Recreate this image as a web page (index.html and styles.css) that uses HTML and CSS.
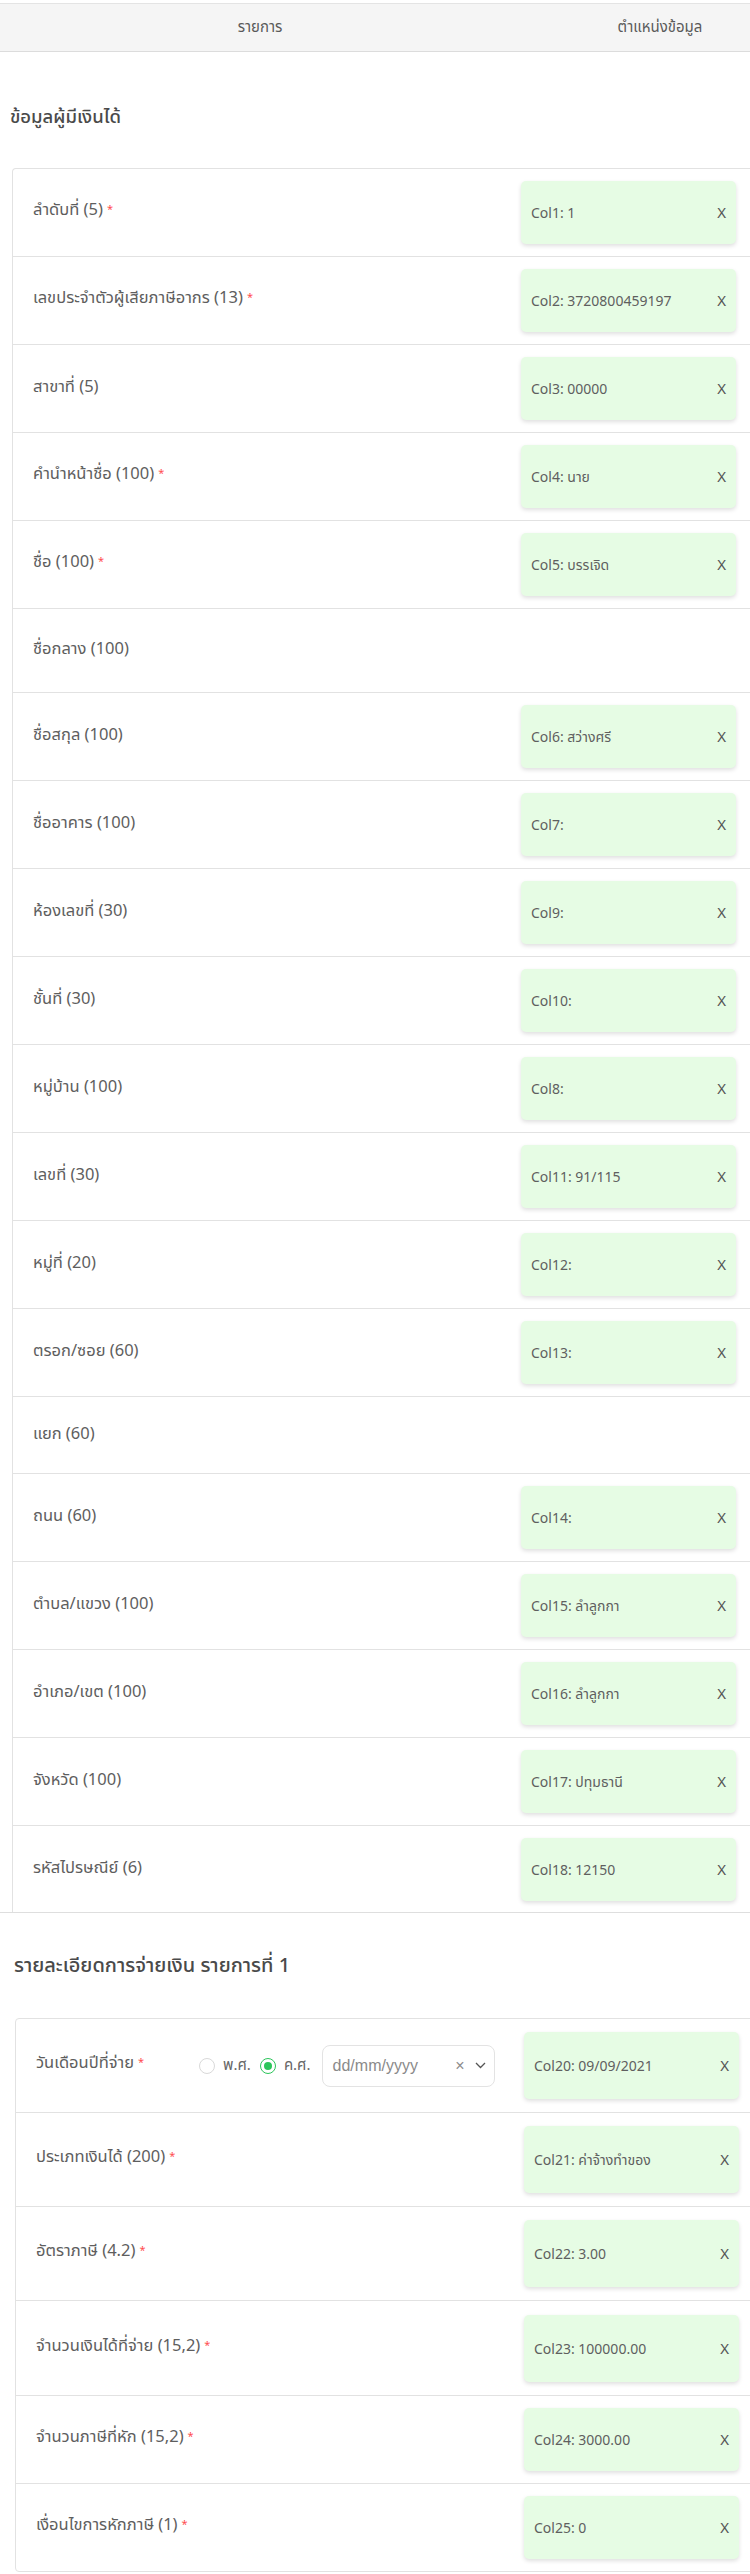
FILE: index.html
```html
<!DOCTYPE html>
<html lang="th">
<head>
<meta charset="utf-8">
<title>Mapping</title>
<link rel="stylesheet" href="styles.css">
</head>
<body>
<div class="page">
  <div class="thead">
    <div class="th">รายการ</div>
    <div class="th">ตำแหน่งข้อมูล</div>
  </div>

  <section class="sec sec-1">
    <h2 class="sec-title">ข้อมูลผู้มีเงินได้</h2>
    <div class="card">
      <div class="row"><div class="label">ลำดับที่ (5)<span class="req">*</span></div><div class="chip"><span>Col1: 1</span><span class="x">X</span></div></div>
      <div class="row"><div class="label">เลขประจำตัวผู้เสียภาษีอากร (13)<span class="req">*</span></div><div class="chip"><span>Col2: 3720800459197</span><span class="x">X</span></div></div>
      <div class="row"><div class="label">สาขาที่ (5)</div><div class="chip"><span>Col3: 00000</span><span class="x">X</span></div></div>
      <div class="row"><div class="label">คำนำหน้าชื่อ (100)<span class="req">*</span></div><div class="chip"><span>Col4: นาย</span><span class="x">X</span></div></div>
      <div class="row"><div class="label">ชื่อ (100)<span class="req">*</span></div><div class="chip"><span>Col5: บรรเจิด</span><span class="x">X</span></div></div>
      <div class="row row-empty"><div class="label">ชื่อกลาง (100)</div></div>
      <div class="row"><div class="label">ชื่อสกุล (100)</div><div class="chip"><span>Col6: สว่างศรี</span><span class="x">X</span></div></div>
      <div class="row"><div class="label">ชื่ออาคาร (100)</div><div class="chip"><span>Col7:</span><span class="x">X</span></div></div>
      <div class="row"><div class="label">ห้องเลขที่ (30)</div><div class="chip"><span>Col9:</span><span class="x">X</span></div></div>
      <div class="row"><div class="label">ชั้นที่ (30)</div><div class="chip"><span>Col10:</span><span class="x">X</span></div></div>
      <div class="row"><div class="label">หมู่บ้าน (100)</div><div class="chip"><span>Col8:</span><span class="x">X</span></div></div>
      <div class="row"><div class="label">เลขที่ (30)</div><div class="chip"><span>Col11: 91/115</span><span class="x">X</span></div></div>
      <div class="row"><div class="label">หมู่ที่ (20)</div><div class="chip"><span>Col12:</span><span class="x">X</span></div></div>
      <div class="row"><div class="label">ตรอก/ซอย (60)</div><div class="chip"><span>Col13:</span><span class="x">X</span></div></div>
      <div class="row row-empty row-short"><div class="label">แยก (60)</div></div>
      <div class="row"><div class="label">ถนน (60)</div><div class="chip"><span>Col14:</span><span class="x">X</span></div></div>
      <div class="row"><div class="label">ตำบล/แขวง (100)</div><div class="chip"><span>Col15: ลำลูกกา</span><span class="x">X</span></div></div>
      <div class="row"><div class="label">อำเภอ/เขต (100)</div><div class="chip"><span>Col16: ลำลูกกา</span><span class="x">X</span></div></div>
      <div class="row"><div class="label">จังหวัด (100)</div><div class="chip"><span>Col17: ปทุมธานี</span><span class="x">X</span></div></div>
      <div class="row row-last"><div class="label">รหัสไปรษณีย์ (6)</div><div class="chip"><span>Col18: 12150</span><span class="x">X</span></div></div>
    </div>
  </section>

  <section class="sec sec-2">
    <h2 class="sec-title">รายละเอียดการจ่ายเงิน รายการที่ 1</h2>
    <div class="card card-boxed">
      <div class="row row-tall">
        <div class="label label-date">วันเดือนปีที่จ่าย<span class="req">*</span></div>
        <div class="era">
          <span class="radio"></span><span class="era-text">พ.ศ.</span>
          <span class="radio radio-on"></span><span class="era-text">ค.ศ.</span>
        </div>
        <div class="date-input">
          <span class="ph">dd/mm/yyyy</span>
          <span class="clear">×</span>
          <svg class="chev" width="11" height="7" viewBox="0 0 11 7"><path d="M1 1l4.5 4.5L10 1" fill="none" stroke="#555" stroke-width="1.3"/></svg>
        </div>
        <div class="spacer"></div>
        <div class="chip"><span>Col20: 09/09/2021</span><span class="x">X</span></div>
      </div>
      <div class="row row-tall"><div class="label">ประเภทเงินได้ (200)<span class="req">*</span></div><div class="chip"><span>Col21: ค่าจ้างทำของ</span><span class="x">X</span></div></div>
      <div class="row row-tall"><div class="label">อัตราภาษี (4.2)<span class="req">*</span></div><div class="chip"><span>Col22: 3.00</span><span class="x">X</span></div></div>
      <div class="row row-tall row-tall2"><div class="label">จำนวนเงินได้ที่จ่าย (15,2)<span class="req">*</span></div><div class="chip"><span>Col23: 100000.00</span><span class="x">X</span></div></div>
      <div class="row"><div class="label">จำนวนภาษีที่หัก (15,2)<span class="req">*</span></div><div class="chip"><span>Col24: 3000.00</span><span class="x">X</span></div></div>
      <div class="row row-last"><div class="label">เงื่อนไขการหักภาษี (1)<span class="req">*</span></div><div class="chip"><span>Col25: 0</span><span class="x">X</span></div></div>
    </div>
  </section>
</div>
</body>
</html>
```

FILE: styles.css
```css
html, body {
  margin: 0;
  padding: 0;
  background: #fff;
  overflow-x: hidden;
}

body {
  font-family: "Noto Sans Thai", "Noto Sans", "Liberation Sans", sans-serif;
  color: #595959;
}

.page {
  width: 800px;
  padding-top: 3px;
}

.thead {
  display: grid;
  grid-template-columns: 520px 280px;
  height: 47px;
  align-items: center;
  text-align: center;
  background: #f5f5f5;
  border-top: 1px solid #e4e4e4;
  border-bottom: 1px solid #dcdcdc;
  font-size: 15px;
  color: #5a5a5a;
}

.sec-title {
  margin: 0;
  line-height: 30px;
  font-weight: 500;
  color: #4a4a4a;
}

.sec-1 {
  border-bottom: 1px solid #dedede;
}

.sec-1 .sec-title {
  padding: 50px 0 36px 10px;
  font-size: 18.5px;
}

.sec-1 .card {
  margin-left: 12px;
  border-bottom: none;
  border-bottom-left-radius: 0;
}

.sec-2 .sec-title {
  padding: 38px 0 37px 14px;
  font-size: 20px;
}

.sec-2 .card {
  margin-left: 15px;
}

.card {
  width: 788px;
  box-sizing: border-box;
  border: 1px solid #e2e2e2;
  border-radius: 4px;
}

.row {
  display: flex;
  align-items: center;
  height: 88px;
  box-sizing: border-box;
  padding: 0 63px 0 20px;
  border-bottom: 1px solid #e2e2e2;
}

.row-last {
  border-bottom: none;
  height: 86px;
}

.sec-2 .row-last {
  height: 87px;
}

.row-empty {
  height: 84px;
}

.row-short {
  height: 77px;
}

.row-tall {
  height: 94px;
}

.row-tall2 {
  height: 95px;
}

.label {
  flex: 1;
  font-size: 16.5px;
  line-height: 22px;
  color: #5e5e5e;
  margin-top: -3px;
}

.req {
  color: #ff4d4f;
  font-size: 11px;
  margin-left: 4px;
  position: relative;
  top: -2px;
}

.chip {
  width: 215px;
  height: 63px;
  flex: none;
  box-sizing: border-box;
  display: flex;
  align-items: center;
  justify-content: space-between;
  padding: 2px 10px 0 10px;
  background: #e6fce4;
  border-radius: 5px;
  box-shadow: 0 2px 4px rgba(0, 0, 0, 0.13);
  font-size: 14px;
  color: #5f5f5f;
}

.row-tall .chip {
  height: 67px;
}

.x {
  font-size: 15px;
  color: #555;
}

/* date row */
.label-date {
  flex: none;
  width: 163px;
}

.era {
  display: flex;
  align-items: center;
  flex: none;
}

.radio {
  width: 16px;
  height: 16px;
  box-sizing: border-box;
  border: 1px solid #d9d9d9;
  border-radius: 50%;
  background: #fff;
  display: flex;
  align-items: center;
  justify-content: center;
}

.radio-on {
  border-color: #2cc55a;
  margin-left: 9px;
}

.radio-on::after {
  content: "";
  width: 8px;
  height: 8px;
  border-radius: 50%;
  background: #2cc55a;
}

.era-text {
  margin-left: 8px;
  font-size: 15px;
  color: #666;
}

.date-input {
  flex: none;
  margin-left: 11px;
  width: 173px;
  height: 42px;
  box-sizing: border-box;
  border: 1px solid #e3e3e3;
  border-radius: 8px;
  display: flex;
  align-items: center;
  padding: 0 8px 0 10px;
  font-family: "Liberation Sans", sans-serif;
}

.ph {
  flex: 1;
  font-size: 16px;
  color: #8a8a8a;
}

.clear {
  font-size: 16px;
  color: #8c8c8c;
  margin-right: 10px;
}

.chev {
  display: block;
}

.spacer {
  flex: 1;
}
```
